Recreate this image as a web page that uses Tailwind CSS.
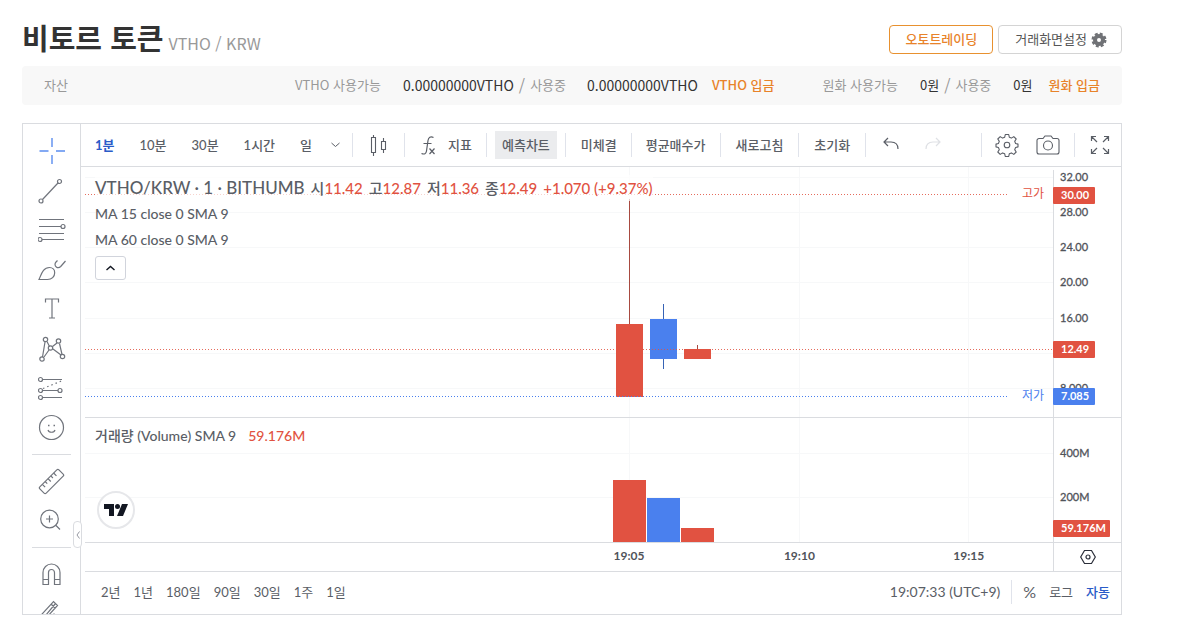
<!DOCTYPE html>
<html lang="ko">
<head>
<meta charset="utf-8">
<title>비토르 토큰 VTHO/KRW</title>
<meta name="viewport" content="width=device-width, initial-scale=1">
<script src="https://cdn.jsdelivr.net/npm/@tailwindcss/browser@4"></script>
</head>
<body class="bg-white pl-[22px] pr-[55px] font-['Noto_Sans_CJK_KR',sans-serif] text-[13px] leading-5 text-[#333]">

<header class="flex h-[66px] items-start justify-between">
  <h1 class="flex items-baseline gap-[5px] pt-[15px] leading-[44px]">
    <span class="text-[29px] font-bold text-[#333]">비토르 토큰</span>
    <span class="text-[16px] text-[#999]">VTHO / KRW</span>
  </h1>
  <div class="flex gap-[5px] pt-[25px]">
    <button class="h-[29px] rounded border border-[#e8912f] px-[15px] font-medium leading-[25px] pb-[2px] text-[#e8832a]">오토트레이딩</button>
    <button class="flex h-[29px] items-center gap-1 rounded border border-[#d4d4d4] pl-4 pr-[14px] text-[#555]">
      <span class="pb-[2px]">거래화면설정</span>
      <svg class="size-4" viewBox="0 0 16 16" fill="none"><circle cx="8" cy="8" r="4" stroke="#707276" stroke-width="4"/><circle cx="8" cy="8" r="6.3" stroke="#707276" stroke-width="2.4" stroke-dasharray="2.9 2.05"/></svg>
    </button>
  </div>
</header>

<section class="flex h-[39px] items-center rounded bg-[#f8f8f8] pb-[2px] pl-[22px] pr-[22px] text-[#999]">
  <span class="mr-auto">자산</span>
  <span class="mr-[22px]">VTHO 사용가능</span>
  <span class="text-[14px] text-[#333]">0.00000000VTHO</span>
  <span class="mx-[5px] text-[16px]">/</span>
  <span class="mr-[21px]">사용중</span>
  <span class="text-[14px] text-[#333]">0.00000000VTHO</span>
  <a href="#" class="ml-[14px] mr-[48px] font-medium text-[#e8832a]">VTHO 입금</a>
  <span class="mr-[22px]">원화 사용가능</span>
  <span class="text-[#333]">0원</span>
  <span class="mx-[5px] text-[16px]">/</span>
  <span class="mr-[22px]">사용중</span>
  <span class="text-[#333]">0원</span>
  <a href="#" class="ml-4 font-medium text-[#e8832a]">원화 입금</a>
</section>

<main class="mt-[18px] flex border border-[#dadce0] font-[Lato,'Noto_Sans_CJK_KR',sans-serif] text-[#5a5e66]">

  <!-- drawing tools -->
  <nav class="relative w-[58px] shrink-0 border-r border-[#dadce0] [contain:size]">
    <div class="h-full overflow-hidden pt-[9px] text-[#70747c]">
      <div class="flex h-[313px] flex-col items-center justify-between">
        <button aria-label="십자선" class="h-9"><svg class="size-7 text-[#5b8def]" viewBox="0 0 28 28" stroke="currentColor" fill="none" stroke-width="1.4"><path d="M14 1v9M14 18v9M1.500 14h9M18 14h9"/></svg></button>
        <button aria-label="추세선" class="h-9"><svg class="size-7" viewBox="0 0 28 28" stroke="currentColor" fill="none" stroke-width="1.2"><path d="M4.500 22.500L20 6"/><circle cx="3" cy="24" r="2"/><circle cx="21.500" cy="4.500" r="2"/></svg></button>
        <button aria-label="피보나치" class="h-9"><svg class="size-7" viewBox="0 0 28 28" stroke="currentColor" fill="none" stroke-width="1.2"><path d="M1 3.500h25M1 10.500h22M1 17.500h25M4 23.500h22"/><circle cx="25" cy="10.500" r="2"/><circle cx="2" cy="23.500" r="2"/></svg></button>
        <button aria-label="브러시" class="h-9"><svg class="size-7" viewBox="0 0 28 28" stroke="currentColor" fill="none" stroke-width="1.2"><path d="M1 23.500C3.500 18 5 11.500 11.500 11.500c3 0 5.200 2.300 5.200 5.200 0 4-3 6.800-7.200 6.800zM18 6c-1.500 1.500-1.200 4 .3 5 1.400 1 3.200.7 4.400-.5L27.500 5M18 6L19.500 4.500"/></svg></button>
        <button aria-label="텍스트" class="h-9"><svg class="size-7" viewBox="0 0 28 28" stroke="currentColor" fill="none" stroke-width="1.2"><path d="M7.500 7.500V4h13v3.500M14 4v19M11 23h6"/></svg></button>
        <button aria-label="패턴" class="h-9"><svg class="size-7" viewBox="0 0 28 28" stroke="currentColor" fill="none" stroke-width="1.2"><path d="M4.500 22L7 7M9 6.500l2.500 5M14.500 11.500L19 8M21.500 8.500L24 19.500M6 22l5-7M15 14l8 6"/><circle cx="7.500" cy="4.500" r="2.200"/><circle cx="4" cy="24" r="2.200"/><circle cx="12.500" cy="13" r="2.200"/><circle cx="20.500" cy="6" r="2.200"/><circle cx="24.500" cy="21.500" r="2.200"/></svg></button>
        <button aria-label="예측" class="h-9"><svg class="size-7" viewBox="0 0 28 28" stroke="currentColor" fill="none" stroke-width="1.2"><path d="M4 5.500h20M4 16.500h16M4 23.500h20"/><path d="M5 14.500L23.500 7" stroke-dasharray="1.500 3"/><circle cx="2.500" cy="5.500" r="2"/><circle cx="2.500" cy="16.500" r="2"/><circle cx="22" cy="16.500" r="2"/><circle cx="2.500" cy="23.500" r="2"/></svg></button>
        <button aria-label="아이콘" class="h-9"><svg class="size-7" viewBox="0 0 28 28" stroke="currentColor" fill="none" stroke-width="1.2"><circle cx="13.500" cy="13.500" r="12"/><path d="M10 16c1 3 6 3 7 0"/><path d="M10 11.500h1.500M15.500 11.500h1.500" stroke-width="1.600"/></svg></button>
      </div>
      <div class="mx-[9px] mt-2 h-px bg-[#dadce0]"></div>
      <div class="mt-[9px] flex flex-col items-center gap-[2px]">
        <button aria-label="측정" class="h-9"><svg class="size-7" viewBox="0 0 28 28" stroke="currentColor" fill="none" stroke-width="1.2"><g transform="rotate(-45 13.500 13.500)"><rect x="0" y="9" width="27" height="9" rx="1.500"/><path d="M5 9v4M9 9v3M13 9v4M17 9v3M21 9v4"/></g></svg></button>
        <button aria-label="확대" class="h-9"><svg class="size-7" viewBox="0 0 28 28" stroke="currentColor" fill="none" stroke-width="1.2"><circle cx="11.500" cy="13" r="8.800"/><path d="M17.500 19l4.500 4.500M8 13h7M11.500 9.500v7"/></svg></button>
      </div>
      <div class="mx-[9px] mt-[9px] h-px bg-[#dadce0]"></div>
      <div class="mt-2 flex flex-col items-center gap-[2px]">
        <button aria-label="자석" class="h-9"><svg class="size-7" viewBox="0 0 28 28" stroke="currentColor" fill="none" stroke-width="1.2"><path d="M5 24.500V12.500a8.500 8.500 0 0 1 17 0v12h-5.500V12.500a3 3 0 0 0-6 0v12zM5 19.500H10.500M16.500 19.500h5.500"/></svg></button>
        <button aria-label="그리기 유지" class="h-9 shrink-0"><svg class="size-7" viewBox="0 0 28 28" stroke="currentColor" fill="none" stroke-width="1.2"><path d="M0 20.500L15.500 3.500l4 4L4 24.500M3 23L17.500 5.500M13 6l4 4M10 23l6-7 4 3-4 5"/></svg></button>
      </div>
    </div>
    <button aria-label="도구 접기" class="absolute top-[397px] -right-[2px] flex h-[27px] w-[9px] items-center justify-center rounded border border-[#dadce0] bg-white"><svg class="h-2 w-1" viewBox="0 0 4 8" fill="none" stroke="#9598a1"><path d="M3.500 .5L1 4l2.500 3.500"/></svg></button>
  </nav>

  <div class="min-w-0 flex-1">
    <!-- toolbar -->
    <div class="flex h-[43px] items-center whitespace-nowrap border-b border-[#dadce0] pl-[14px] pr-[11px] font-medium">
      <div class="flex items-center gap-[25px]">
        <button class="font-bold text-[#2a5bc8]">1분</button>
        <button>10분</button>
        <button>30분</button>
        <button>1시간</button>
        <button>일</button>
      </div>
      <button aria-label="시간 간격" class="ml-[19px] mr-3"><svg class="h-[6px] w-[9px]" viewBox="0 0 9 6" fill="none" stroke="currentColor"><path d="M.5 1l4 3.500L8.500 1"/></svg></button>
      <i class="h-6 w-px bg-[#e0e3eb]"></i>
      <button aria-label="캔들" class="ml-[11px] mr-3"><svg class="size-7" viewBox="0 0 28 28" fill="none" stroke="currentColor" stroke-width="1.1"><path d="M7.500 6.500h4v15h-4zM9.500 4v2.500M9.500 21.500V25M17.500 10.500h4v8h-4zM19.500 7v3.500M19.500 18.500V22"/></svg></button>
      <i class="h-6 w-px bg-[#e0e3eb]"></i>
      <button class="mx-[14px] flex items-center gap-[5px]"><svg class="size-6" viewBox="0 0 24 24" fill="none" stroke="currentColor" stroke-width="1.2"><path d="M14.500 4.500c-3-1.500-5 0-5.500 3L7.500 18c-.5 2.800-2 3.700-5 2.500M4.500 10.500h8M10.500 15.500l5 5.500M15.500 15.500l-5 5.500"/></svg>지표</button>
      <i class="h-6 w-px bg-[#e0e3eb]"></i>
      <button class="mx-2 h-7 bg-[#ebecee] px-[7px]">예측차트</button>
      <i class="h-6 w-px bg-[#e0e3eb]"></i>
      <button class="ml-[15px] mr-[14px]">미체결</button>
      <i class="h-6 w-px bg-[#e0e3eb]"></i>
      <button class="mx-[14px]">평균매수가</button>
      <i class="h-6 w-px bg-[#e0e3eb]"></i>
      <button class="mx-[15px]">새로고침</button>
      <i class="h-6 w-px bg-[#e0e3eb]"></i>
      <button class="mx-[15px]">초기화</button>
      <i class="h-6 w-px bg-[#e0e3eb]"></i>
      <button aria-label="실행 취소" class="ml-[17px]"><svg class="size-4" viewBox="0 0 16 16" fill="none" stroke="currentColor" stroke-width="1.2"><path d="M5 1L1 5l4 4M1 5h7c4.500 0 7 2.500 7 7"/></svg></button>
      <button aria-label="다시 실행" class="ml-[26px]" disabled><svg class="size-4" viewBox="0 0 16 16" fill="none" stroke="#dfe1e5" stroke-width="1.2"><path d="M11 1l4 4-4 4M15 5H8C3.500 5 1 7.500 1 12"/></svg></button>
      <i class="ml-auto h-6 w-px bg-[#e0e3eb]"></i>
      <button aria-label="설정" class="ml-[13px]"><svg class="size-6" viewBox="0 0 24 24" fill="none" stroke="currentColor" stroke-width="1.1"><circle cx="12" cy="12" r="2.800"/><path stroke-linejoin="round" d="M10.300 1.500h3.400l.6 2.700 2.100.9 2.400-1.500 2.400 2.400-1.500 2.400.9 2.100 2.400.6v2.800l-2.400.6-.9 2.100 1.500 2.400-2.400 2.400-2.400-1.500-2.100.9-.6 2.700h-3.400l-.6-2.700-2.100-.9-2.400 1.500L2.800 19l1.500-2.400-.9-2.100-2.400-.6v-2.800l2.400-.6.900-2.100L2.800 6l2.400-2.400 2.400 1.500 2.100-.9z"/></svg></button>
      <button aria-label="스크린샷" class="ml-[17px]"><svg class="size-6" viewBox="0 0 24 24" fill="none" stroke="currentColor" stroke-width="1.1"><path d="M3 5.500h4l2-2.500h6l2 2.500h4a2 2 0 0 1 2 2V19a2 2 0 0 1-2 2H3a2 2 0 0 1-2-2V7.500a2 2 0 0 1 2-2z"/><circle cx="12" cy="12.500" r="4.500"/></svg></button>
      <i class="ml-[14px] h-6 w-px bg-[#e0e3eb]"></i>
      <button aria-label="전체 화면" class="ml-[15px]"><svg class="size-5" viewBox="0 0 20 20" fill="none" stroke="currentColor" stroke-width="1.2"><path d="M6 1.500H1.500V6M1.500 1.500L7 7M14 1.500h4.500V6M18.500 1.500L13 7M6 18.500H1.500V14M1.500 18.500L7 13M14 18.500h4.500V14M18.500 18.500L13 13"/></svg></button>
    </div>

    <div class="pl-1">
      <!-- price pane -->
      <div class="relative flex h-[251px] border-b border-[#dadce0]">
        <svg class="h-full min-w-0 flex-1" viewBox="0 0 968 250" preserveAspectRatio="none" shape-rendering="crispEdges">
          <path d="M0 10.500H968M0 45.500H968M0 80.500H968M0 115.500H968M0 151.500H968M0 186.500H968M0 221.500H968M544.500 0V250M714.500 0V250M883.500 0V250" stroke="#f7f8f9"/>
          <path d="M544.500 32V157M612.500 178V182" stroke="#a84a40"/>
          <path d="M578.500 137V202" stroke="#3763b5"/>
          <path d="M531 157h27v73h-27zM599 182h27v10h-27z" fill="#e15241"/>
          <path d="M565 152h27v40h-27z" fill="#4a80ee"/>
          <path d="M0 27.500H922M0 182.500H968" stroke="#e15241" stroke-opacity=".85" stroke-dasharray="1 2"/>
          <path d="M0 229.500H922" stroke="#4a80ee" stroke-dasharray="1 2"/>
        </svg>
        <svg class="h-full w-[68px] shrink-0 overflow-visible text-[11px]" fill="#50535a" stroke-width="0.300">
          <path d="M.5 3V250" stroke="#dadce0" stroke-width="1"/>
          <text x="-31" y="31" font-size="12" fill="#e15241">고가</text>
          <text x="-31" y="233" font-size="12" fill="#4a80ee">저가</text>
          <g stroke="#50535a">
            <text x="7" y="14">32.00</text><text x="7" y="49">28.00</text><text x="7" y="84">24.00</text><text x="7" y="119">20.00</text><text x="7" y="155">16.00</text><text x="7" y="225">8.000</text>
          </g>
          <rect y="20" width="42" height="17" rx="1" fill="#e15241"/>
          <rect y="174" width="42" height="17" rx="1" fill="#e15241"/>
          <rect y="221" width="42" height="17" rx="1" fill="#4a80ee"/>
          <g fill="#fff" font-weight="700"><text x="8" y="32">30.00</text><text x="8" y="186">12.49</text><text x="8" y="233">7.085</text></g>
        </svg>
        <div class="absolute left-[10px] top-2 flex flex-col items-start text-[14px] font-medium leading-[26px]">
          <div class="flex items-baseline gap-[6px] bg-white/70 text-[15px]">
            <span class="text-[17px]">VTHO/KRW · 1 · BITHUMB</span>
            <span>시<span class="text-[#e15241]">11.42</span></span>
            <span>고<span class="text-[#e15241]">12.87</span></span>
            <span>저<span class="text-[#e15241]">11.36</span></span>
            <span>종<span class="text-[#e15241]">12.49</span></span>
            <span class="text-[#e15241]">+1.070 (+9.37%)</span>
          </div>
          <span>MA 15 close 0 SMA 9</span>
          <span>MA 60 close 0 SMA 9</span>
          <button aria-label="지표 접기" class="mt-[3px] flex h-6 w-[31px] items-center justify-center rounded-[3px] border border-[#d1d4dc] bg-white"><svg class="h-[6px] w-[9px]" viewBox="0 0 9 6" fill="none" stroke="#131722" stroke-width="1.400"><path d="M.5 5l4-3.500L8.500 5"/></svg></button>
        </div>
      </div>

      <!-- volume pane -->
      <div class="relative flex h-[125px] border-b border-[#dadce0]">
        <svg class="h-full min-w-0 flex-1" viewBox="0 0 968 124" preserveAspectRatio="none" shape-rendering="crispEdges">
          <path d="M0 35.500H968M0 79.500H968M544.500 0V124M714.500 0V124M883.500 0V124" stroke="#f7f8f9"/>
          <path d="M528 62h33v62h-33zM596 110h33v14h-33z" fill="#e15241"/>
          <path d="M562 80h33v44h-33z" fill="#4a80ee"/>
        </svg>
        <svg class="h-full w-[68px] shrink-0 text-[11px]" fill="#50535a" stroke-width="0.300">
          <path d="M.5 0V124" stroke="#dadce0" stroke-width="1"/>
          <g stroke="#50535a"><text x="7" y="39">400M</text><text x="7" y="83">200M</text></g>
          <rect y="102" width="57" height="17" rx="1" fill="#e15241"/>
          <text x="8" y="114" fill="#fff" font-weight="700">59.176M</text>
        </svg>
        <div class="absolute left-[10px] top-2 flex gap-3 text-[14px] font-medium">
          <span>거래량 (Volume) SMA 9</span><span class="text-[#e15241]">59.176M</span>
        </div>
        <a href="#" aria-label="TradingView" class="absolute left-3 top-[73px] flex size-[38px] items-center justify-center rounded-full border-2 border-[#e6e7ea] bg-white"><svg class="h-3 w-6" viewBox="0 0 24 12" fill="#131722"><path d="M0 0h10v12H5V5H0z"/><circle cx="13.500" cy="2.500" r="2.500"/><path d="M18 0h6l-5 12h-6z"/></svg></a>
      </div>

      <!-- time axis -->
      <div class="flex h-[29px] border-b border-[#dadce0] text-[12px] font-bold">
        <svg class="h-full min-w-0 flex-1" fill="#50535a" text-anchor="middle"><text x="56.200%" y="17">19:05</text><text x="73.800%" y="17">19:10</text><text x="91.300%" y="17">19:15</text></svg>
        <button aria-label="축 설정" class="flex w-[68px] shrink-0 items-center justify-center border-l border-[#dadce0]"><svg class="size-4" viewBox="0 0 16 16" fill="none" stroke="#2a2e39" stroke-width="1.200"><path d="M4.500 1.500h7L15.300 8l-3.800 6.500h-7L.7 8z"/><circle cx="8" cy="8" r="2"/></svg></button>
      </div>
    </div>

    <!-- range bar -->
    <div class="flex h-[42px] items-center gap-[13px] whitespace-nowrap pb-[2px] pl-5 pr-[11px] text-[13px]">
      <button>2년</button><button>1년</button><button>180일</button><button>90일</button><button>30일</button><button>1주</button><button>1일</button>
      <button class="ml-auto text-[14px]">19:07:33 (UTC+9)</button>
      <i class="-ml-[2px] h-6 w-px bg-[#e0e3eb]"></i>
      <button class="-ml-[2px] text-[16px]">%</button><button>로그</button><button class="font-medium text-[#2a5bc8]">자동</button>
    </div>
  </div>
</main>
</body>
</html>
